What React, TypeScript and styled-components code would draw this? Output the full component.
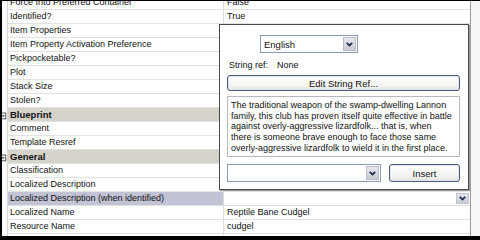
import React from "react";
import styled, { createGlobalStyle } from "styled-components";

const GlobalStyle = createGlobalStyle`
    html, body {
        margin: 0;
        padding: 0;
        background: #000;
    }
    body {
        font-family: "Liberation Sans", Arial, sans-serif;
        font-size: 9px;
        color: #111;
    }
`;

interface RowData {
    name?: string;
    value?: string;
    category?: string;
    selected?: boolean;
    dropdown?: boolean;
}

const rows: RowData[] = [
    { name: "Force Into Preferred Container", value: "False" },
    { name: "Identified?", value: "True" },
    { name: "Item Properties" },
    { name: "Item Property Activation Preference" },
    { name: "Pickpocketable?" },
    { name: "Plot" },
    { name: "Stack Size" },
    { name: "Stolen?" },
    { category: "Blueprint" },
    { name: "Comment" },
    { name: "Template Resref" },
    { category: "General" },
    { name: "Classification" },
    { name: "Localized Description" },
    { name: "Localized Description (when identified)", selected: true, dropdown: true },
    { name: "Localized Name", value: "Reptile Bane Cudgel" },
    { name: "Resource Name", value: "cudgel" },
    { name: "Tag", value: "cudgel" },
];

const description =
    "The traditional weapon of the swamp-dwelling Lannon family, this club has proven itself quite effective in battle against overly-aggressive lizardfolk... that is, when there is someone brave enough to face those same overly-aggressive lizardfolk to wield it in the first place.";

function Chevron() {
    return (
        <svg width="7" height="5" viewBox="0 0 7 5">
            <polyline points="0.8,0.8 3.5,3.6 6.2,0.8" fill="none" stroke="#1c2a44" strokeWidth="1.7" />
        </svg>
    );
}

function CollapseBox() {
    return (
        <svg width="6" height="9" viewBox="0 0 6 9">
            <rect x="-3.5" y="1.5" width="8" height="7" fill="#fff" stroke="#3a3a3a" />
            <line x1="-2" y1="5" x2="3" y2="5" stroke="#111" strokeWidth="1.2" />
        </svg>
    );
}

export default function App() {
    return (
        <>
            <GlobalStyle />
            <Frame>
                <Grid>
                    <List>
                        {rows.map((r, i) =>
                            r.category ? (
                                <Row key={i}>
                                    <Gutter>
                                        <CollapseBox />
                                    </Gutter>
                                    <CategoryCell>{r.category}</CategoryCell>
                                    <EdgeCell />
                                </Row>
                            ) : (
                                <Row key={i}>
                                    <Gutter />
                                    <NameCell selected={r.selected}>{r.name}</NameCell>
                                    <ValueCell>
                                        <span>{r.value}</span>
                                        {r.dropdown && (
                                            <ArrowButton>
                                                <Chevron />
                                            </ArrowButton>
                                        )}
                                    </ValueCell>
                                    <EdgeCell />
                                </Row>
                            )
                        )}
                    </List>

                    <Popup>
                        <LanguageSelect>
                            <span>English</span>
                            <SelectArrow>
                                <Chevron />
                            </SelectArrow>
                        </LanguageSelect>
                        <StringRef>
                            <span>String ref:</span>
                            <span>None</span>
                        </StringRef>
                        <XpButton height={16}>Edit String Ref...</XpButton>
                        <TextBox>{description}</TextBox>
                        <BottomBar>
                            <Combo>
                                <SelectArrow>
                                    <Chevron />
                                </SelectArrow>
                            </Combo>
                            <XpButton height={18} width={71}>
                                Insert
                            </XpButton>
                        </BottomBar>
                    </Popup>
                </Grid>
            </Frame>
        </>
    );
}

const Frame = styled.div`
    width: 480px;
    height: 240px;
    box-sizing: border-box;
    padding: 1px 0 4px 2px;
    background: #000;
`;

const Grid = styled.div`
    position: relative;
    height: 100%;
    overflow: hidden;
    background: #fff;
`;

const List = styled.div`
    display: flex;
    flex-direction: column;
    margin-top: -5px;
`;

const Row = styled.div`
    display: flex;
    height: 14px;
    flex: none;
`;

const Gutter = styled.div`
    width: 6px;
    flex: none;
    display: flex;
    align-items: center;
    background: #fbfbfb;
    border-right: 1px solid #d8d8d8;
    box-sizing: border-box;
`;

const NameCell = styled.div<{ selected?: boolean }>`
    width: 216px;
    flex: none;
    box-sizing: border-box;
    padding-left: 2px;
    line-height: 13px;
    border-bottom: 1px solid #e2e2e2;
    border-right: 1px solid #dcdcdc;
    background: ${({ selected }) => (selected ? "#c3c3d6" : "#fff")};
    white-space: nowrap;
    overflow: hidden;
`;

const ValueCell = styled.div`
    flex: 1;
    display: flex;
    align-items: flex-start;
    justify-content: space-between;
    box-sizing: border-box;
    padding-left: 3px;
    line-height: 13px;
    border-bottom: 1px solid #e2e2e2;
    white-space: nowrap;
    overflow: hidden;
`;

const CategoryCell = styled.div`
    flex: 1;
    box-sizing: border-box;
    padding-left: 2px;
    line-height: 13px;
    font-weight: bold;
    font-size: 9.5px;
    background: #d6d3cb;
    border-bottom: 1px solid #e2e2e2;
`;

const EdgeCell = styled.div`
    width: 10px;
    flex: none;
    box-sizing: border-box;
    border-left: 1px solid #9c9c9c;
    background: #f6f6f6;
`;

const ArrowButton = styled.div`
    width: 13px;
    height: 11px;
    margin: 1px 1px 0 0;
    display: flex;
    align-items: center;
    justify-content: center;
    background: linear-gradient(#e4e6ee, #c9ccd8);
    border: 1px solid #c0c4d0;
    box-sizing: border-box;
`;

const Popup = styled.div`
    position: absolute;
    left: 217px;
    top: 23px;
    width: 250px;
    box-sizing: border-box;
    display: flex;
    flex-direction: column;
    padding: 10px 8px 7px 7px;
    background: #fff;
    border: 1px solid #4a4a4a;
    box-shadow: 1px 1px 0 #9a9a9a;
`;

const LanguageSelect = styled.div`
    width: 98px;
    height: 18px;
    margin-left: 33px;
    box-sizing: border-box;
    display: flex;
    align-items: center;
    justify-content: space-between;
    padding: 1px 1px 1px 3px;
    border: 1px solid #8a9db4;
    font-size: 9.5px;
`;

const SelectArrow = styled.div`
    width: 13px;
    align-self: stretch;
    display: flex;
    align-items: center;
    justify-content: center;
    background: linear-gradient(#e8e9ef, #c8cad4);
    border: 1px solid #b8bcc8;
    box-sizing: border-box;
`;

const StringRef = styled.div`
    margin-top: 7px;
    height: 10px;
    line-height: 10px;
    display: flex;
    gap: 9px;
    padding-left: 2px;
`;

const XpButton = styled.div<{ height: number; width?: number }>`
    height: ${({ height }) => height}px;
    width: ${({ width }) => (width ? width + "px" : "auto")};
    margin-top: 5px;
    box-sizing: border-box;
    display: flex;
    align-items: center;
    justify-content: center;
    border: 1px solid #4b5c78;
    border-radius: 3px;
    background: linear-gradient(#ffffff, #f3f3f0 70%, #e2e2dc);
    box-shadow: inset 0 0 0 1px #dfe6f0;
    font-size: 9.5px;
`;

const TextBox = styled.div`
    margin-top: 5px;
    height: 61px;
    box-sizing: border-box;
    padding: 3px 7px 0 3px;
    border: 1px solid #b4b8c0;
    line-height: 10.7px;
    overflow: hidden;
`;

const BottomBar = styled.div`
    margin-top: 2px;
    display: flex;
    align-items: flex-end;
    gap: 8px;
`;

const Combo = styled.div`
    width: 154px;
    height: 18px;
    box-sizing: border-box;
    display: flex;
    justify-content: flex-end;
    padding: 1px;
    border: 1px solid #8a9db4;
`;
